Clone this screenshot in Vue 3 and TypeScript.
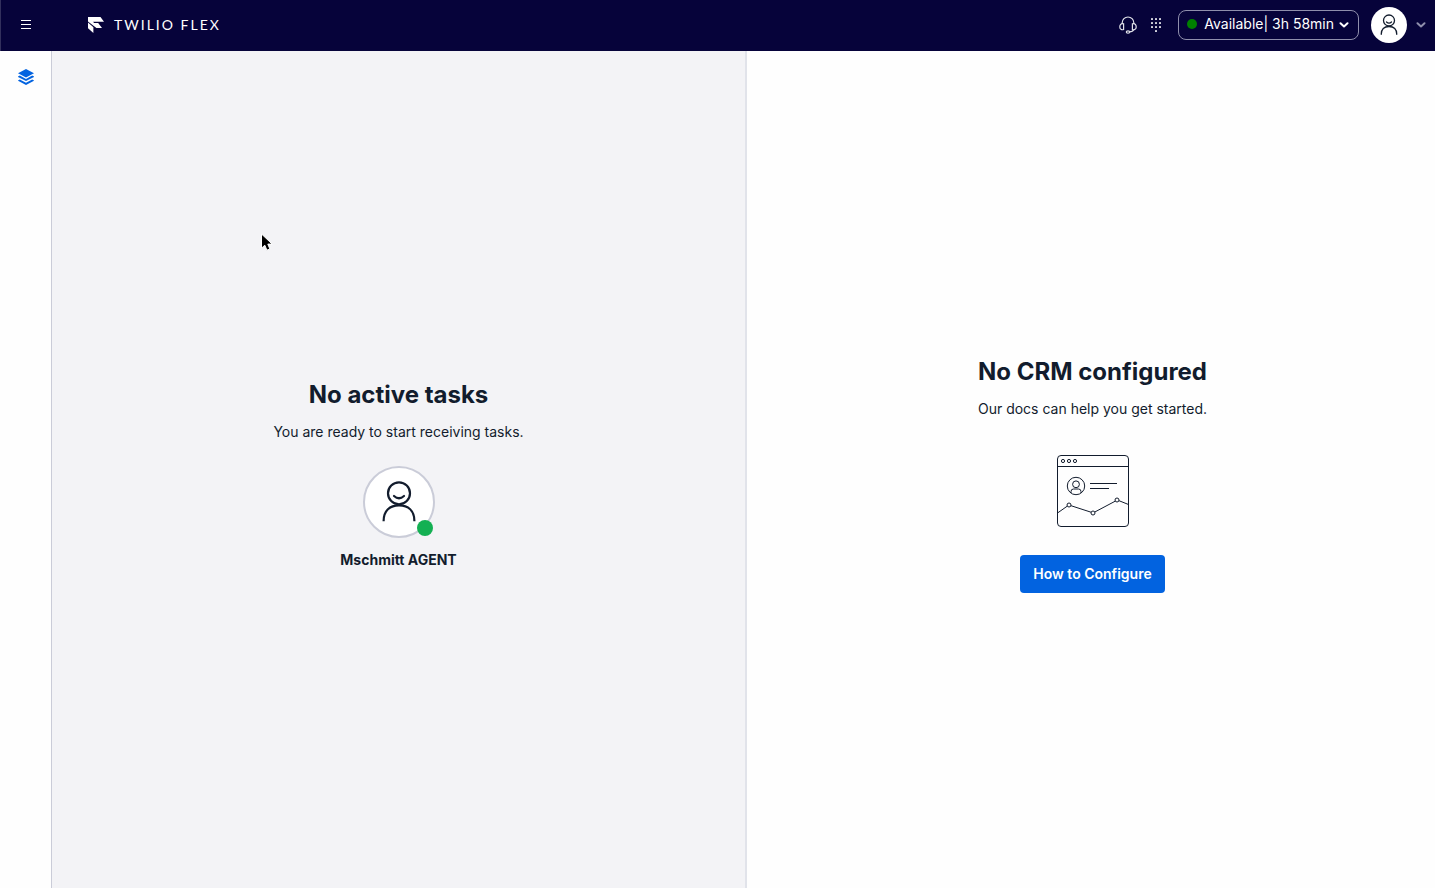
<script setup lang="ts">
import { ref } from 'vue'

const agentName = ref<string>('Mschmitt AGENT')
const activity = ref<string>('Available')
const elapsed = ref<string>('3h 58min')

const dots: { x: number; y: number }[] = [
  ...[0, 1, 2].flatMap((row) => [0, 1, 2].map((col) => ({ x: col * 4 + 1, y: row * 4 }))),
  { x: 5, y: 12 },
]
</script>

<template>
  <div class="app">
    <header class="bar">
      <button class="icon-btn menu" type="button" aria-label="Open navigation">
        <svg width="12" height="12" viewBox="0 0 12 12">
          <path d="M1 1.5h10M1 5.5h10M1 9.5h10" stroke="#fff" stroke-width="1" />
        </svg>
      </button>

      <a class="brand" href="#">
        <svg width="16" height="16" viewBox="0 0 16 16" fill="#fff">
          <path d="M0 0h12.500L16 4.800H5.200L6 6h4.200L14 10.900H8.400L0 4.400z" />
          <path d="M0 5.600l5.400 4.600V16L0 11.200z" />
        </svg>
        <span>TWILIO FLEX</span>
      </a>

      <div class="actions">
        <button class="icon-btn headset" type="button" aria-label="Audio devices">
          <svg width="18" height="18" viewBox="0 0 18 18" fill="none" stroke="#e1e3ea" stroke-width="1.2">
            <path d="M3.2 8V6.800a5.800 5.800 0 0 1 11.600 0V8" />
            <path d="M4.600 7.800C1.800 7 .8 9.200.8 10.900c0 2.200 1.800 3.400 3.800 2.600z" />
            <path d="M13.400 7.800c2.800-.8 3.800 1.400 3.800 3.100 0 2.200-1.800 3.400-3.800 2.600z" />
            <path d="M14.600 13.800c-.5 1.400-2 2-4 2" />
            <ellipse cx="9" cy="16" rx="1.700" ry="1.200" />
          </svg>
        </button>
        <button class="icon-btn dialpad" type="button" aria-label="Dialpad">
          <svg width="12" height="14" viewBox="0 0 12 14" fill="#dfe0e8">
            <rect v-for="(d, i) in dots" :key="i" :x="d.x" :y="d.y" width="2" height="2" rx=".4" />
          </svg>
        </button>
        <button class="status" type="button">
          <span class="status-dot"></span>
          <span>{{ activity }}| {{ elapsed }}</span>
          <svg width="10" height="6" viewBox="0 0 10 6">
            <path d="M1.5 1.2L5 4.4l3.500-3.200" fill="none" stroke="#fff" stroke-width="2" stroke-linecap="round" stroke-linejoin="round" />
          </svg>
        </button>
        <button class="icon-btn account" type="button" aria-label="Account menu">
          <span class="account-avatar">
            <svg width="18" height="22" viewBox="0 0 36 44" fill="none" stroke="#121c2d" stroke-width="2.600" stroke-linecap="round">
              <circle cx="18" cy="13" r="11" />
              <path d="M13 16q5 4.500 10 0" />
              <path d="M2.500 40.500C2.500 30 8 25 18 25s15.500 5 15.500 15.500" />
            </svg>
          </span>
          <svg width="10" height="6" viewBox="0 0 10 6">
            <path d="M1.500 1.200L5 4.400l3.500-3.200" fill="none" stroke="#8f8fac" stroke-width="2" stroke-linecap="round" stroke-linejoin="round" />
          </svg>
        </button>
      </div>
    </header>

    <div class="body">
      <nav class="rail" aria-label="Main">
        <a href="#" aria-label="Agent desktop">
          <svg width="16" height="16" viewBox="0 0 16 16" fill="#0263e0">
            <path d="M8 0l8 4.200-8 4.200-8-4.200z" />
            <path d="M0 7.500l1.800-.9L8 9.900l6.200-3.300 1.800.9v.4l-8 4.200-8-4.200z" />
            <path d="M0 11.400l1.800-.9L8 13.700l6.200-3.200 1.800.9v.4L8 16l-8-4.200z" />
          </svg>
        </a>
      </nav>

      <main class="pane tasks">
        <h1>No active tasks</h1>
        <p>You are ready to start receiving tasks.</p>
        <div class="avatar">
          <svg width="34" height="42" viewBox="0 0 34 42" fill="none" stroke="#121c2d" stroke-width="2.200" stroke-linecap="butt">
            <circle cx="17" cy="12.300" r="11" />
            <path d="M12 15q5 4.500 10 0" stroke-linecap="round" />
            <path d="M1.600 40.200C1.600 29.500 8 24.400 17 24.400s15.400 5.100 15.400 15.800" />
          </svg>
          <span class="presence"></span>
        </div>
        <strong class="agent">{{ agentName }}</strong>
      </main>

      <section class="pane crm">
        <h2>No CRM configured</h2>
        <p>Our docs can help you get started.</p>
        <svg class="illustration" width="72" height="72" viewBox="0 0 72 72" fill="none" stroke="#121c2d">
          <rect x=".5" y=".5" width="71" height="71" rx="3.500" />
          <path d="M.5 11.500h71" />
          <circle cx="6" cy="6" r="1.600" />
          <circle cx="12" cy="6" r="1.600" />
          <circle cx="18" cy="6" r="1.600" />
          <circle cx="19" cy="31" r="8.700" />
          <circle cx="19" cy="29.300" r="3.400" />
          <path d="M14 38v-1.500q0-2.500 2.500-2.500h5q2.500 0 2.500 2.500V38" />
          <path d="M33 28.500h27M33 33.500h19" />
          <path d="M.5 58l9.700-6.800M14 50.700l20 6.500M37.800 57l20.400-10.800M62 45.700l9.500 3.800" />
          <circle cx="12" cy="50" r="2" />
          <circle cx="36" cy="58" r="2" />
          <circle cx="60" cy="45" r="2" />
        </svg>
        <a class="primary" href="#">How to Configure</a>
      </section>
    </div>

    <svg class="pointer" width="14" height="20" viewBox="0 0 14 20">
      <path d="M1.500 1v14.200l3.300-3 2.100 5 3-1.200-2.100-4.900h4.400z" fill="#000" stroke="#fff" stroke-width="1" />
    </svg>
  </div>
</template>

<style>
body {
  margin: 0;
}
</style>

<style scoped>
.app {
  position: relative;
  display: flex;
  flex-direction: column;
  min-height: 100vh;
  background: #fefefe;
  color: #121c2d;
  font-family: Inter, "Liberation Sans", sans-serif;
  font-size: 14px;
  line-height: 20px;
}

button {
  margin: 0;
  border: 0;
  padding: 0;
  background: none;
  color: inherit;
  font: inherit;
  cursor: pointer;
}

a {
  color: inherit;
  text-decoration: none;
}

svg {
  display: block;
  flex: none;
}

.bar {
  display: flex;
  align-items: center;
  box-sizing: border-box;
  height: 51px;
  padding: 0 9px 1px 0;
  border-left: 1px solid #32305c;
  background: #06033a;
  color: #fff;
}

.icon-btn {
  display: flex;
  align-items: center;
  justify-content: center;
}

.menu {
  width: 50px;
  height: 50px;
}

.brand {
  display: flex;
  align-items: center;
  gap: 10px;
  margin-left: 37px;
  font-family: Lato, "Open Sans", sans-serif;
  font-size: 14px;
  font-weight: 400;
  letter-spacing: 2px;
}

.actions {
  display: flex;
  align-items: center;
  margin-left: auto;
}

.dialpad {
  margin-left: 13px;
}

.status {
  display: flex;
  align-items: center;
  box-sizing: border-box;
  height: 30px;
  margin-left: 16px;
  padding: 0 9px 2px 8px;
  border: 1px solid #8f8fac;
  border-radius: 8px;
  font-weight: 400;
}

.status svg {
  margin: 2px 0 0 5px;
}

.status-dot {
  width: 10px;
  height: 10px;
  margin-right: 7px;
  border-radius: 50%;
  background: #008000;
}

.account {
  gap: 9px;
  margin-left: 12px;
}

.account-avatar {
  display: flex;
  align-items: center;
  justify-content: center;
  width: 36px;
  height: 36px;
  border-radius: 50%;
  background: #fff;
}

.body {
  display: grid;
  flex: 1;
  grid-template-columns: 52px 695fr 688fr;
}

.rail {
  display: flex;
  justify-content: center;
  align-items: flex-start;
  padding-top: 18px;
  border-right: 1px solid #caccd8;
}

.pane {
  display: flex;
  flex-direction: column;
  align-items: center;
  justify-content: center;
  padding-top: 9px;
  text-align: center;
}

.tasks {
  border-right: 2px solid #e1e3ea;
  background: #f3f3f6;
}

.crm {
  padding-left: 3px;
}

h1,
h2 {
  margin: 0 0 10px;
  font-size: 24px;
  font-weight: 700;
  line-height: 34px;
}

p {
  margin: 0;
}

.avatar {
  position: relative;
  display: flex;
  align-items: center;
  justify-content: center;
  box-sizing: border-box;
  width: 72px;
  height: 72px;
  margin: 24px 0 12px;
  border: 2px solid #caccd8;
  border-radius: 50%;
  background: #fff;
}

.presence {
  position: absolute;
  right: 0;
  bottom: 0;
  width: 16px;
  height: 16px;
  border-radius: 50%;
  background: #14b053;
}

.agent {
  font-weight: 700;
}

.illustration {
  margin: 36px 0 28px;
}

.primary {
  padding: 9px 13px;
  border-radius: 4px;
  background: #0263e0;
  color: #fff;
  font-weight: 600;
}

.pointer {
  position: absolute;
  top: 233px;
  left: 260px;
}
</style>
